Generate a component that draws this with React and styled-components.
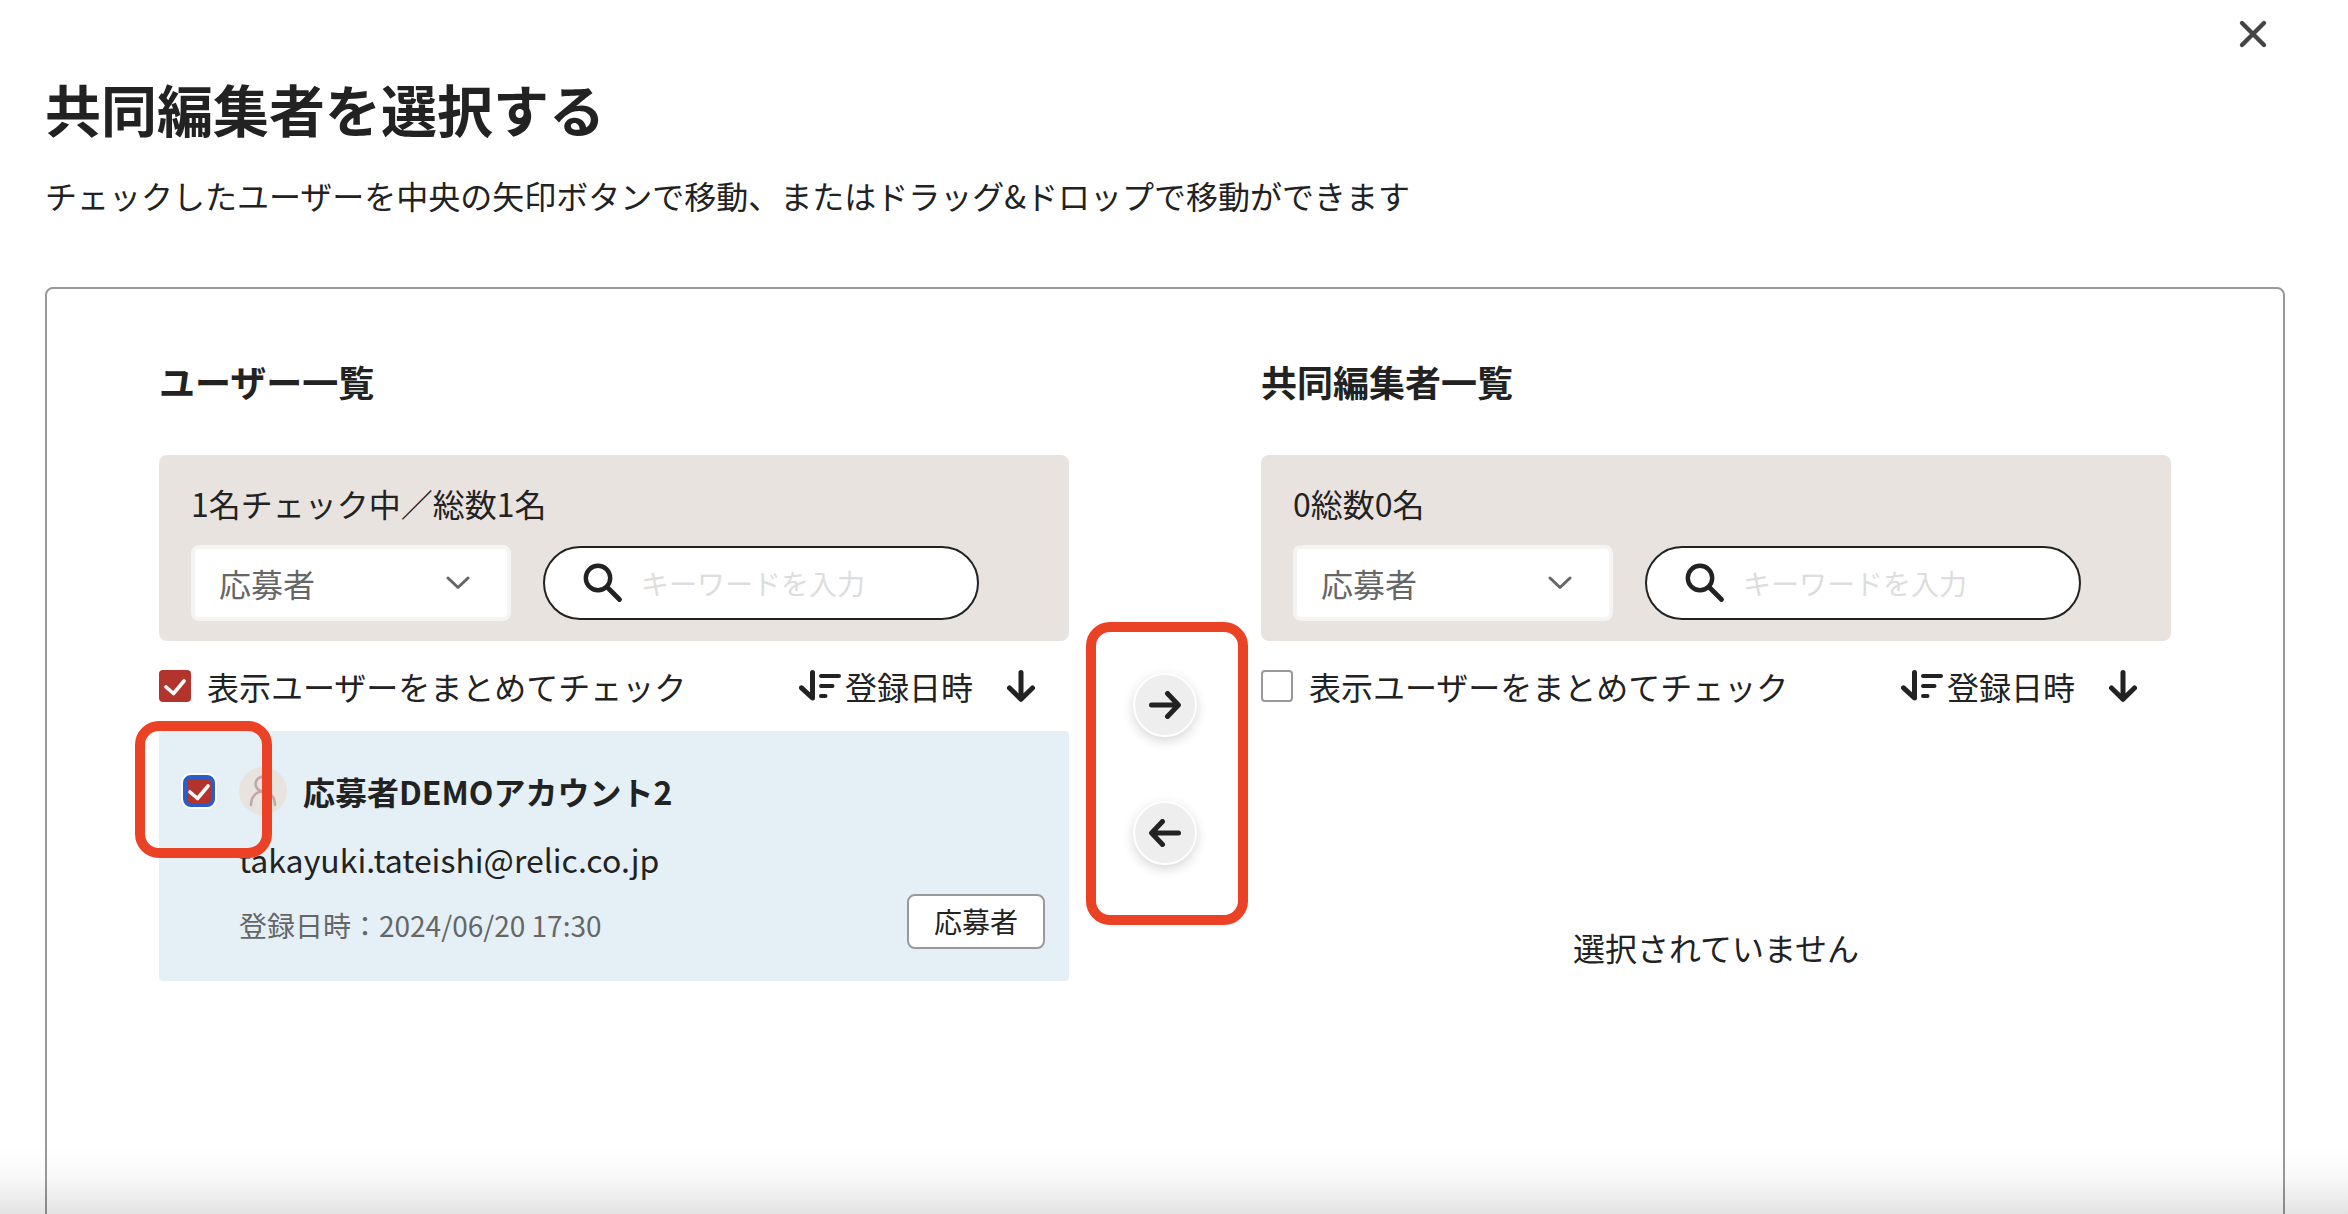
import React from 'react';
import styled, { createGlobalStyle, css } from 'styled-components';

const GlobalStyle = createGlobalStyle`
  * {
    box-sizing: border-box;
  }

  body {
    margin: 0;
    background: #fff;
    color: #222;
    font-family: "Noto Sans CJK JP", sans-serif;
    font-size: 32px;
    line-height: 48px;
  }

  button, input, select {
    font-family: inherit;
    color: inherit;
  }
`;

const Modal = styled.main`
  position: relative;
  height: 100vh;
  overflow: hidden;
  padding: 0 63px 0 45px;
`;

const ModalHeader = styled.header`
  display: flex;
  flex-direction: column;
`;

const CloseButton = styled.button`
  align-self: flex-end;
  display: flex;
  padding: 8px;
  margin: 8px 6px 0 0;
  border: 0;
  background: none;
  cursor: pointer;
`;

const Title = styled.h1`
  margin: 8px 0 0;
  font-size: 56px;
  line-height: 80px;
  font-weight: 700;
`;

const Lead = styled.p`
  margin: 23px 0 0;
`;

const Panel = styled.section`
  display: grid;
  grid-template-columns: 1fr 192px 1fr;
  min-height: 1000px;
  margin-top: 68px;
  padding: 68px 112px;
  border: 2px solid #999;
  border-radius: 8px;
`;

const Column = styled.div`
  min-width: 0;
`;

const ColumnTitle = styled.h2`
  margin: 0 0 50px;
  font-size: 36px;
  line-height: 48px;
  font-weight: 700;
`;

const FilterBox = styled.div`
  padding: 24px 32px 20px;
  border-radius: 8px;
  background: #e9e3df;
`;

const Count = styled.p`
  margin: 0 0 18px;
`;

const Filters = styled.div`
  display: flex;
  align-items: center;
  gap: 32px;
`;

const SelectWrapper = styled.div`
  position: relative;
  flex: 0 1 320px;
  color: #666;

  svg {
    position: absolute;
    top: 31px;
    right: 41px;
    pointer-events: none;
  }
`;

const RoleSelect = styled.select`
  display: block;
  width: 100%;
  height: 76px;
  padding: 0 72px 0 24px;
  border: 4px solid #f4f4f4;
  border-radius: 8px;
  background: #fff;
  font-size: 32px;
  appearance: none;
`;

const SearchField = styled.label`
  display: flex;
  align-items: center;
  gap: 18px;
  flex: 0 1 436px;
  height: 74px;
  padding: 0 38px;
  border: 2px solid #222;
  border-radius: 37px;
  background: #fff;

  svg {
    flex: none;
  }
`;

const SearchInput = styled.input`
  width: 100%;
  min-width: 0;
  padding: 0;
  border: 0;
  outline: 0;
  background: none;
  font-size: 28px;

  &::placeholder {
    color: #ddd;
    opacity: 1;
  }
`;

const ListHeader = styled.div`
  display: flex;
  align-items: center;
  justify-content: space-between;
  height: 90px;
  padding-right: 34px;
`;

const CheckLabel = styled.label`
  display: flex;
  align-items: center;
  gap: 16px;
`;

const CheckMark = styled.span`
  position: relative;
  display: flex;
  flex: none;
  width: 32px;
  height: 32px;

  svg {
    position: absolute;
    inset: 0;
    pointer-events: none;
  }
`;

const CheckInput = styled.input`
  width: 32px;
  height: 32px;
  margin: 0;
  border: 2px solid #999;
  border-radius: 4px;
  background: #fff;
  appearance: none;

  &:checked {
    border-color: #b2342c;
    background: #b2342c;
  }

  ${({ $focused }) => $focused && css`
    &:checked {
      border: 4px solid #2a5dc8;
      border-radius: 8px;
      box-shadow: 0 0 0 2px #fff;
    }
  `}
`;

const SortGroup = styled.div`
  display: flex;
  align-items: center;
  gap: 34px;
`;

const SortButton = styled.button`
  display: flex;
  align-items: center;
  gap: 4px;
  padding: 0;
  border: 0;
  background: none;
  font-size: 32px;
  line-height: 48px;
  cursor: pointer;
`;

const UserCard = styled.article`
  position: relative;
  display: flex;
  align-items: flex-start;
  gap: 24px;
  min-height: 250px;
  padding: 36px 24px 32px;
  border-radius: 4px;
  background: #e4f0f6;
`;

const UserCheck = styled.div`
  display: flex;
  align-items: center;
  height: 48px;
`;

const UserBody = styled.div`
  flex: 1;
`;

const UserHead = styled.div`
  display: flex;
  align-items: center;
  gap: 16px;
`;

const UserName = styled.h3`
  margin: 0;
  font-size: 32px;
  line-height: 48px;
  font-weight: 700;
`;

const Mail = styled.p`
  margin: 20px 0 0;
`;

const UserFoot = styled.div`
  display: flex;
  align-items: flex-end;
  justify-content: space-between;
  margin-top: 11px;
`;

const RegisteredAt = styled.p`
  margin: 0;
  color: #666;
  font-size: 28px;
`;

const Badge = styled.span`
  min-width: 138px;
  padding: 4px 20px;
  border: 2px solid #999;
  border-radius: 8px;
  background: #fff;
  font-size: 28px;
  line-height: 43px;
  text-align: center;
`;

const EmptyMessage = styled.p`
  margin: 192px 0 0;
  text-align: center;
`;

const MoveColumn = styled.div`
  position: relative;
  display: flex;
  flex-direction: column;
  align-items: center;
  gap: 64px;
  padding-top: 316px;
`;

const MoveButton = styled.button`
  display: flex;
  align-items: center;
  justify-content: center;
  width: 64px;
  height: 64px;
  padding: 0;
  border: 2px solid #fff;
  border-radius: 50%;
  background: #eee;
  box-shadow: 0 4px 12px rgba(0, 0, 0, 0.16);
  cursor: pointer;
`;

const Highlight = styled.div`
  position: absolute;
  border: 10px solid #eb4124;
  border-radius: 24px;
  pointer-events: none;
`;

const CardHighlight = styled(Highlight)`
  top: -10px;
  left: -24px;
  width: 137px;
  height: 137px;
`;

const MoveHighlight = styled(Highlight)`
  top: 265px;
  left: 17px;
  width: 162px;
  height: 303px;
`;

const BottomShade = styled.div`
  position: absolute;
  right: 0;
  bottom: 0;
  left: 0;
  height: 68px;
  background: linear-gradient(rgba(0, 0, 0, 0), rgba(0, 0, 0, 0.025) 45%, rgba(0, 0, 0, 0.11));
  pointer-events: none;
`;

const CloseIcon = () => (
  <svg width="36" height="36" viewBox="0 0 36 36" fill="none" stroke="#444" strokeWidth="4.4" strokeLinecap="round">
    <path d="M7 7l22 22M29 7L7 29" />
  </svg>
);

const ChevronIcon = () => (
  <svg width="24" height="14" viewBox="0 0 24 14" fill="none" stroke="#666" strokeWidth="3" strokeLinecap="round" strokeLinejoin="round">
    <path d="M2 2l10 9.5L22 2" />
  </svg>
);

const SearchIcon = () => (
  <svg width="40" height="40" viewBox="0 0 40 40" fill="none" stroke="#222">
    <circle cx="15" cy="15" r="12.2" strokeWidth="4.4" />
    <path d="M24.5 24.5L36.5 36.5" strokeWidth="4.8" strokeLinecap="round" />
  </svg>
);

const SortIcon = () => (
  <svg width="42" height="32" viewBox="0 0 42 32" fill="none" stroke="#222" strokeLinecap="round">
    <path d="M13.5 2.5V28L2.5 17.8" strokeWidth="5" strokeLinejoin="round" />
    <path d="M22 6H40M22 16h11.5M22 26h4.5" strokeWidth="4" />
  </svg>
);

const DownIcon = () => (
  <svg width="28" height="32" viewBox="0 0 28 32" fill="none" stroke="#222" strokeWidth="5" strokeLinecap="round" strokeLinejoin="round">
    <path d="M14 2.5V29M2.5 18L14 29.3L25.5 18" />
  </svg>
);

const ArrowIcon = ({ left }) => (
  <svg width="32" height="28" viewBox="0 0 32 28" fill="none" stroke="#222" strokeWidth="5" strokeLinecap="round" strokeLinejoin="round">
    <path d={left ? 'M29.5 14H3M13.5 2.5L2.6 14L13.5 25.5' : 'M2.5 14H29M18.5 2.5L29.4 14L18.5 25.5'} />
  </svg>
);

const TickIcon = () => (
  <svg width="32" height="32" viewBox="0 0 32 32" fill="none" stroke="#fff" strokeWidth="3.6" strokeLinecap="round" strokeLinejoin="round">
    <path d="M7 17l7.5 6.5L25 11" />
  </svg>
);

const Avatar = () => (
  <svg width="48" height="48" viewBox="0 0 48 48" fill="none" stroke="#bfa8a8" strokeWidth="2.6" strokeLinecap="round">
    <circle cx="24" cy="24" r="24" fill="#e9e3e0" stroke="none" />
    <circle cx="24" cy="17" r="7.4" />
    <path d="M12 38c0-8 5-13.5 12-13.5S36 30 36 38" />
  </svg>
);

const Checkbox = ({ checked, focused, ...rest }) => (
  <CheckMark>
    <CheckInput type="checkbox" defaultChecked={checked} $focused={focused} {...rest} />
    {checked && <TickIcon />}
  </CheckMark>
);

const FilterArea = ({ count }) => (
  <FilterBox>
    <Count>{count}</Count>
    <Filters>
      <SelectWrapper>
        <RoleSelect aria-label="応募者">
          <option>応募者</option>
        </RoleSelect>
        <ChevronIcon />
      </SelectWrapper>
      <SearchField>
        <SearchIcon />
        <SearchInput type="text" placeholder="キーワードを入力" />
      </SearchField>
    </Filters>
  </FilterBox>
);

const ListControls = ({ checked }) => (
  <ListHeader>
    <CheckLabel>
      <Checkbox checked={checked} />
      表示ユーザーをまとめてチェック
    </CheckLabel>
    <SortGroup>
      <SortButton type="button">
        <SortIcon />
        登録日時
      </SortButton>
      <SortButton type="button" aria-label="降順">
        <DownIcon />
      </SortButton>
    </SortGroup>
  </ListHeader>
);

const App = () => {
  return (
    <>
      <GlobalStyle />
      <Modal>
        <ModalHeader>
          <CloseButton type="button" aria-label="閉じる">
            <CloseIcon />
          </CloseButton>
          <Title>共同編集者を選択する</Title>
          <Lead>チェックしたユーザーを中央の矢印ボタンで移動、またはドラッグ&amp;ドロップで移動ができます</Lead>
        </ModalHeader>
        <Panel>
          <Column>
            <ColumnTitle>ユーザー一覧</ColumnTitle>
            <FilterArea count="1名チェック中／総数1名" />
            <ListControls checked />
            <UserCard>
              <UserCheck>
                <Checkbox checked focused aria-label="応募者DEMOアカウント2" />
              </UserCheck>
              <UserBody>
                <UserHead>
                  <Avatar />
                  <UserName>応募者DEMOアカウント2</UserName>
                </UserHead>
                <Mail>takayuki.tateishi@relic.co.jp</Mail>
                <UserFoot>
                  <RegisteredAt>登録日時：2024/06/20 17:30</RegisteredAt>
                  <Badge>応募者</Badge>
                </UserFoot>
              </UserBody>
              <CardHighlight />
            </UserCard>
          </Column>
          <MoveColumn>
            <MoveButton type="button" aria-label="右へ移動">
              <ArrowIcon />
            </MoveButton>
            <MoveButton type="button" aria-label="左へ移動">
              <ArrowIcon left />
            </MoveButton>
            <MoveHighlight />
          </MoveColumn>
          <Column>
            <ColumnTitle>共同編集者一覧</ColumnTitle>
            <FilterArea count="0総数0名" />
            <ListControls />
            <EmptyMessage>選択されていません</EmptyMessage>
          </Column>
        </Panel>
        <BottomShade />
      </Modal>
    </>
  );
};

export default App;
